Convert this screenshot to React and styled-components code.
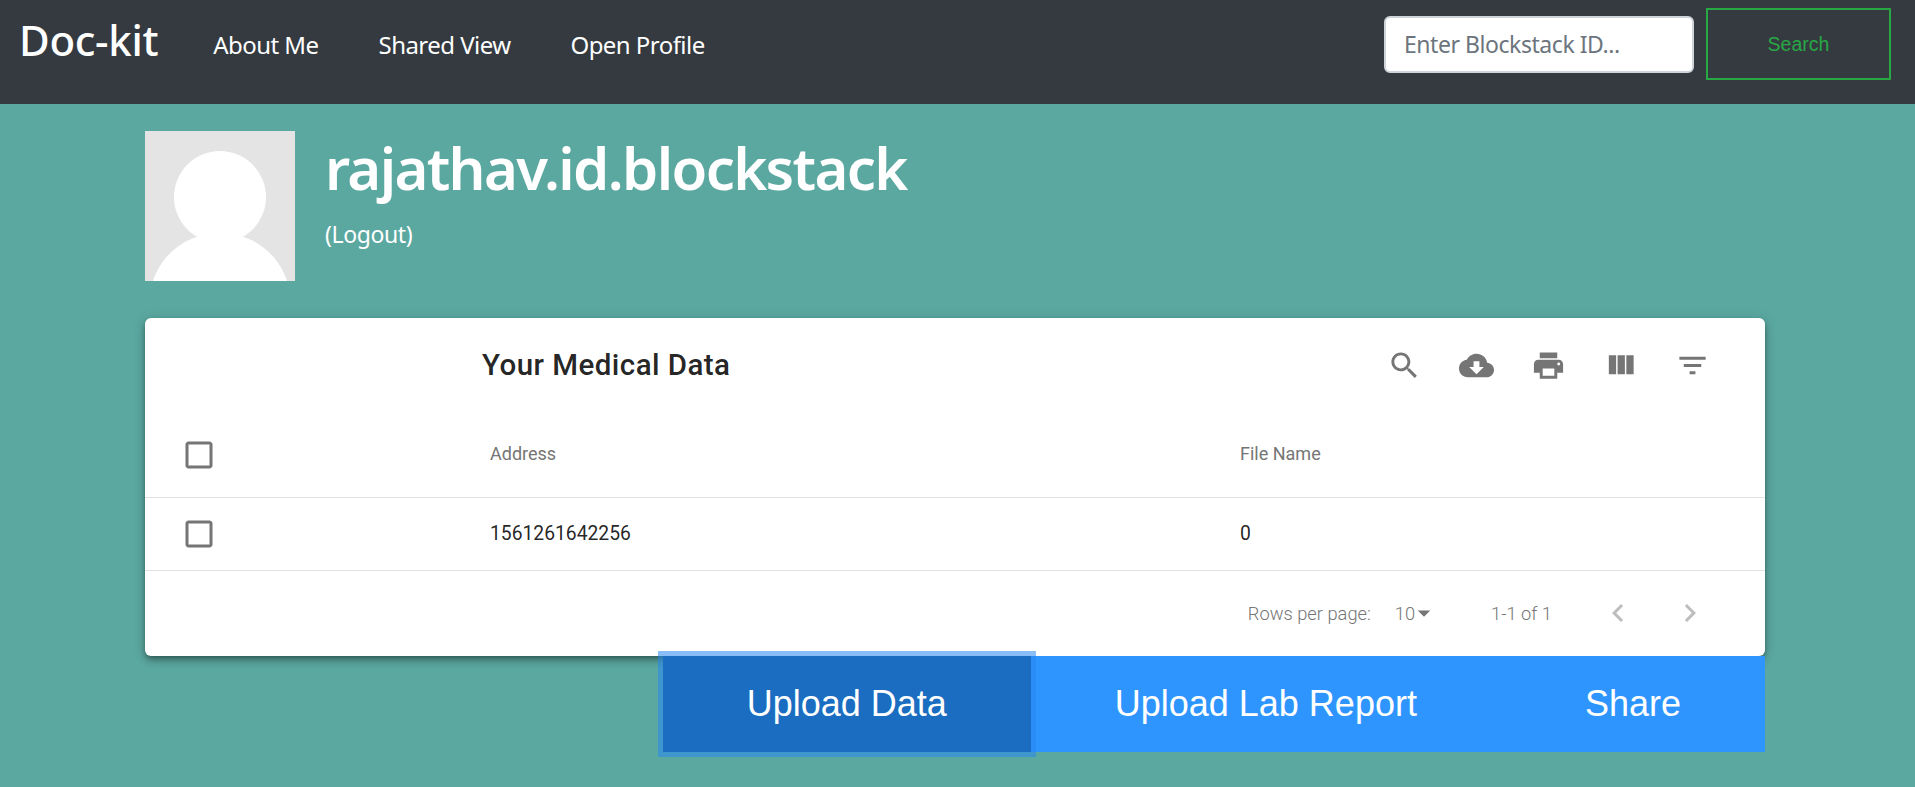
import React from "react";
import styled, { createGlobalStyle } from "styled-components";

const Global = createGlobalStyle`
  html, body { margin: 0; padding: 0; background: #5ba8a0; }
  body { font-family: "Noto Sans", "Open Sans", sans-serif; overflow: hidden; }
  * { box-sizing: border-box; }
`;

const Page = styled.div`
  width: 1915px;
  height: 787px;
  background: #5ba8a0;
`;

const NavBar = styled.nav`
  height: 104px;
  background: #343a40;
  display: flex;
  align-items: flex-start;
  padding: 8px 24px 0 19px;
`;

const Brand = styled.a`
  color: #fff;
  font-size: 42px;
  font-weight: 500;
  line-height: 64px;
  letter-spacing: -0.3px;
  margin-right: 55px;
`;

const NavLink = styled.a`
  color: #fff;
  font-size: 24px;
  line-height: 76px;
  margin-right: 60px;
  margin-top: -1px;
  letter-spacing: -0.55px;
`;

const SearchForm = styled.form`
  margin-left: auto;
  display: flex;
  align-items: center;
  gap: 12px;
`;

const SearchInput = styled.input`
  width: 310px;
  height: 57px;
  border: 2px solid #ced4da;
  border-radius: 6px;
  padding: 0 18px;
  font: 400 23px "Noto Sans", sans-serif;
  letter-spacing: -0.45px;
  color: #495057;
  background: #fff;
  &::placeholder { color: #6c757d; opacity: 1; }
`;

const SearchButton = styled.button`
  width: 185px;
  height: 72px;
  background: transparent;
  border: 2px solid #28a745;
  color: #28a745;
  font: 400 19.5px "Liberation Sans", sans-serif;
`;

const Main = styled.main`
  padding: 27px 150px 0 145px;
`;

const Profile = styled.section`
  display: flex;
  gap: 30px;
  height: 187px;
`;

const Avatar = styled.svg`
  width: 150px;
  height: 150px;
  display: block;
`;

const ProfileText = styled.div`
  display: flex;
  flex-direction: column;
`;

const UserName = styled.h1`
  margin: -3px 0 0;
  color: #fff;
  font-size: 58px;
  font-weight: 600;
  line-height: 80px;
  letter-spacing: -1.65px;
`;

const Logout = styled.a`
  color: #fff;
  font-size: 23px;
  line-height: 30px;
  margin-top: 11px;
  letter-spacing: -0.4px;
`;

const Card = styled.section`
  height: 338px;
  background: #fff;
  border-radius: 6px;
  box-shadow: 0 3px 5px -1px rgba(0,0,0,.3), 0 5px 8px rgba(0,0,0,.2), 0 1px 14px rgba(0,0,0,.12);
  font-family: Roboto, sans-serif;
`;

const Toolbar = styled.div`
  height: 94px;
  display: flex;
  align-items: center;
  padding: 0 37px 0 337px;
`;

const Title = styled.h2`
  margin: 0;
  font-size: 29.5px;
  font-weight: 500;
  letter-spacing: .45px;
  color: rgba(0,0,0,.87);
  flex: 1;
`;

const IconButton = styled.span`
  width: 72px;
  display: flex;
  justify-content: center;
  color: ${(p) => (p.$muted ? "#bdbdbd" : "#757575")};
`;

const Row = styled.div`
  display: grid;
  grid-template-columns: 345px 750px 1fr;
  align-items: center;
  height: ${(p) => p.$h}px;
  border-bottom: 1.5px solid #e2e2e2;
  color: ${(p) => (p.$head ? "#757575" : "rgba(0,0,0,.87)")};
  font-size: ${(p) => (p.$head ? 18 : 19.3)}px;
`;

const RowText = styled.span`
  margin-top: -2px;
`;

const CheckCell = styled.div`
  padding-left: 36px;
  display: flex;
  color: #757575;
`;

const Footer = styled.div`
  height: 84px;
  display: flex;
  align-items: center;
  justify-content: flex-end;
  padding-right: 39px;
  color: #757575;
  font-size: 18.3px;
  font-weight: 300;
`;

const RowsLabel = styled.span`
  margin-right: 24px;
`;

const Select = styled.span`
  display: flex;
  align-items: center;
  margin-right: 60px;
`;

const Caret = styled.svg`
  width: 30px;
  height: 30px;
  margin: 0 -8px 0 -6px;
  fill: #757575;
`;

const PageInfo = styled.span`
  margin-right: 30px;
`;

const Actions = styled.div`
  display: flex;
  justify-content: flex-end;
`;

const ActionButton = styled.button`
  height: 96px;
  padding: 0 84px;
  border: 0;
  color: #fff;
  font: 400 36px "Liberation Sans", sans-serif;
  background: ${(p) => (p.$active ? "#1a6dc0" : "#2e95ff")};
  ${(p) => p.$active && `
    width: 368px;
    padding: 0;
    position: relative;
    box-shadow: 0 0 0 5px rgba(38, 135, 240, .55);
  `}
`;

const Icon = ({ d, size = 35 }) => (
  <svg width={size} height={size} viewBox="0 0 24 24" fill="currentColor"><path d={d} /></svg>
);

const CHECK = "M19 5v14H5V5h14m0-2H5c-1.1 0-2 .9-2 2v14c0 1.1.9 2 2 2h14c1.1 0 2-.9 2-2V5c0-1.1-.9-2-2-2z";
const TOOLS = [
  "M15.5 14h-.79l-.28-.27C15.41 12.59 16 11.11 16 9.5 16 5.91 13.09 3 9.5 3S3 5.91 3 9.5 5.91 16 9.5 16c1.61 0 3.09-.59 4.23-1.57l.27.28v.79l5 4.99L20.49 19l-4.99-5zm-6 0C7.01 14 5 11.99 5 9.5S7.01 5 9.5 5 14 7.01 14 9.5 11.99 14 9.5 14z",
  "M19.35 10.04C18.67 6.59 15.64 4 12 4 9.11 4 6.6 5.64 5.35 8.04 2.34 8.36 0 10.91 0 14c0 3.31 2.69 6 6 6h13c2.76 0 5-2.24 5-5 0-2.64-2.05-4.78-4.65-4.96zM17 13l-5 5-5-5h3V9h4v4h3z",
  "M19 8H5c-1.66 0-3 1.34-3 3v6h4v4h12v-4h4v-6c0-1.66-1.34-3-3-3zm-3 11H8v-5h8v5zm3-7c-.55 0-1-.45-1-1s.45-1 1-1 1 .45 1 1-.45 1-1 1zm-1-9H6v4h12V3z",
  "M10 18h5V5h-5v13zm-6 0h5V5H4v13zM16 5v13h5V5h-5z",
  "M10 18h4v-2h-4v2zM3 6v2h18V6H3zm3 7h12v-2H6v2z",
];

export default function App() {
  return (
    <Page>
      <Global />
      <NavBar>
        <Brand>Doc-kit</Brand>
        <NavLink>About Me</NavLink>
        <NavLink>Shared View</NavLink>
        <NavLink>Open Profile</NavLink>
        <SearchForm>
          <SearchInput placeholder="Enter Blockstack ID..." />
          <SearchButton type="button">Search</SearchButton>
        </SearchForm>
      </NavBar>
      <Main>
        <Profile>
          <Avatar viewBox="0 0 150 150">
            <rect width="150" height="150" fill="#e4e4e4" />
            <circle cx="75" cy="66" r="46" fill="#fff" />
            <path d="M8 150C18 120 45 102 75 102s57 18 67 48z" fill="#fff" />
          </Avatar>
          <ProfileText>
            <UserName>rajathav.id.blockstack</UserName>
            <Logout>(Logout)</Logout>
          </ProfileText>
        </Profile>
        <Card>
          <Toolbar>
            <Title>Your Medical Data</Title>
            {TOOLS.map((d) => (
              <IconButton key={d}><Icon d={d} /></IconButton>
            ))}
          </Toolbar>
          <Row $h={86} $head>
            <CheckCell><Icon d={CHECK} size={36} /></CheckCell>
            <RowText>Address</RowText>
            <RowText>File Name</RowText>
          </Row>
          <Row $h={73}>
            <CheckCell><Icon d={CHECK} size={36} /></CheckCell>
            <RowText>1561261642256</RowText>
            <RowText>0</RowText>
          </Row>
          <Footer>
            <RowsLabel>Rows per page:</RowsLabel>
            <Select>
              10
              <Caret viewBox="0 0 24 24"><path d="M7 10l5 5 5-5z" /></Caret>
            </Select>
            <PageInfo>1-1 of 1</PageInfo>
            <IconButton $muted><Icon d="M15.41 7.41L14 6l-6 6 6 6 1.41-1.41L10.83 12z" size={36} /></IconButton>
            <IconButton $muted><Icon d="M10 6L8.59 7.41 13.17 12l-4.58 4.59L10 18l6-6z" size={36} /></IconButton>
          </Footer>
        </Card>
        <Actions>
          <ActionButton $active>Upload Data</ActionButton>
          <ActionButton>Upload Lab Report</ActionButton>
          <ActionButton>Share</ActionButton>
        </Actions>
      </Main>
    </Page>
  );
}
